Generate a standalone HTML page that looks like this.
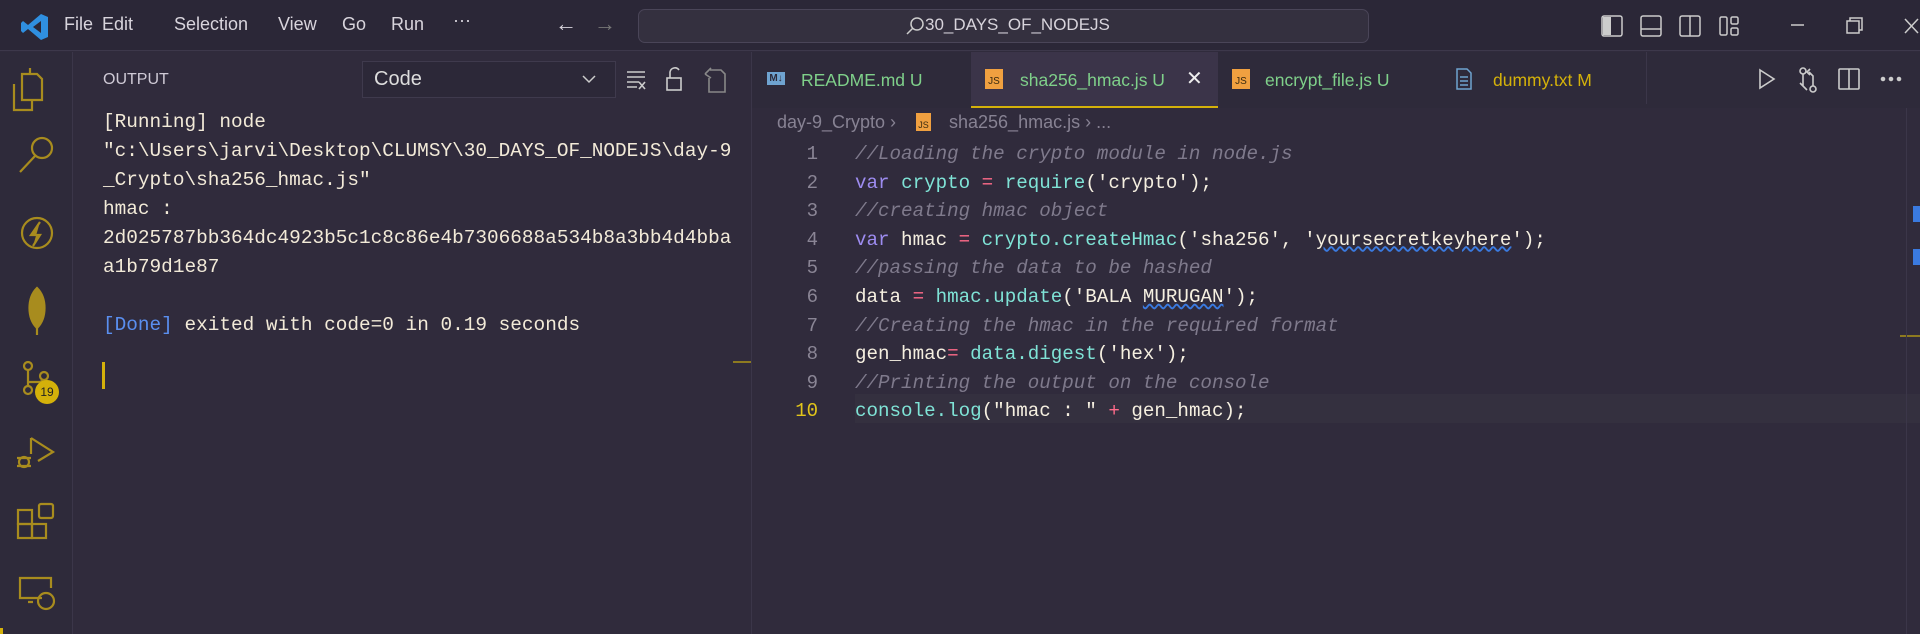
<!DOCTYPE html>
<html><head><meta charset="utf-8"><style>
*{margin:0;padding:0;box-sizing:border-box}
body{width:1920px;height:634px;overflow:hidden;background:#302b3c;font-family:"Liberation Sans",sans-serif;position:relative;color:#ddd}
.a{position:absolute}
.title{left:0;top:0;width:1920px;height:51px;background:#2b2737;border-bottom:1px solid #3d384b}
.menu{top:14px;font-size:18px;color:#d8d4dc}
.act{left:0;top:52px;width:73px;height:582px;background:#2e2a3a;border-right:1px solid #3b3649}
.mono{font-family:"Liberation Mono",monospace}
.out{left:103px;font-size:19.4px;color:#f2ead8;white-space:pre;letter-spacing:0}
.code{left:855px;font-size:19.2px;white-space:pre;color:#f5efe0}
.ln{left:770px;width:48px;text-align:right;font-size:19px;color:#8a8595}
.cm{color:#7f7a8c;font-style:italic}.kw{color:#9d8cf0}.fn{color:#7fe3d6}.op{color:#ff6b8a}.st{color:#f5efe0}
.tab{top:70px;font-size:17.5px}
svg{position:absolute}
</style></head><body>
<div class="a title"></div>
<svg style="left:20px;top:12px" width="30" height="30" viewBox="0 0 30 30"><path d="M21 2 L28 5 V25 L21 28 L8 17 L3 21 L1 19 V11 L3 9 L8 13 Z M21 9 L13 15 L21 21 Z" fill="#2f8fe0"/></svg>
<div class="a menu" style="left:64px">File</div>
<div class="a menu" style="left:102px">Edit</div>
<div class="a menu" style="left:174px">Selection</div>
<div class="a menu" style="left:278px">View</div>
<div class="a menu" style="left:342px">Go</div>
<div class="a menu" style="left:391px">Run</div>
<div class="a menu" style="left:453px;top:10px">···</div>
<div class="a menu" style="left:555px;top:11px;font-size:22px">←</div>
<div class="a menu" style="left:594px;top:11px;font-size:22px;color:#777">→</div>
<div class="a" style="left:638px;top:9px;width:731px;height:34px;border:1px solid #4a4558;border-radius:7px;background:#34303f"></div>
<svg style="left:905px;top:16px" width="20" height="20"><circle cx="12" cy="8" r="6" fill="none" stroke="#ccc" stroke-width="1.5"/><path d="M8 12 L2 18" stroke="#ccc" stroke-width="1.5"/></svg>
<div class="a" style="left:925px;top:15px;font-size:17px;color:#d8d4dc">30_DAYS_OF_NODEJS</div>
<svg style="left:1600px;top:14px" width="320" height="24" fill="none" stroke="#ccc" stroke-width="1.5">
<rect x="2" y="2" width="20" height="20" rx="2"/><rect x="3" y="3" width="8" height="18" fill="#ccc" stroke="none"/>
<rect x="41" y="2" width="20" height="20" rx="2"/><path d="M41 15 H61"/>
<rect x="80" y="2" width="20" height="20" rx="2"/><path d="M90 2 V22"/>
<rect x="120" y="3" width="7" height="18" rx="1.5"/><rect x="131" y="3" width="7" height="7" rx="1.5"/><rect x="131" y="14" width="7" height="7" rx="1.5"/>
<path d="M191 11 H204"/>
<rect x="247" y="7" width="12" height="12"/><path d="M250 7 V4 H262 V16 H259"/>
<path d="M305 5 L318 19 M318 5 L305 19"/></svg>

<div class="a act"></div>
<svg style="left:0;top:60px" width="73" height="574" fill="none" stroke="#a88c1e" stroke-width="2.2">
<path d="M22 14 H37 L42 19 V40 H22 Z M30 14 V8 M14 24 V50 H32 V40"/>
<circle cx="42" cy="88" r="10"/><path d="M35 96 L20 112"/>
<circle cx="37" cy="173" r="15"/><path d="M40 162 L31 175 H40 L33 186" fill="#a88c1e"/>
<path d="M37 228 C47 238 47 258 37 268 C27 258 27 238 37 228 Z" fill="#a88c1e"/><path d="M37 268 V275"/>
<circle cx="28" cy="306" r="4"/><circle cx="44" cy="316" r="4"/><circle cx="28" cy="330" r="4"/><path d="M28 310 V326 M28 322 H40 L44 320"/>
<path d="M31 378 L53 392 L38 401 M31 378 V394"/><circle cx="24" cy="402" r="5"/><path d="M17 398 H31 M17 406 H31"/>
<rect x="18" y="450" width="14" height="14"/><rect x="18" y="464" width="14" height="14"/><rect x="32" y="464" width="14" height="14"/><rect x="39" y="444" width="14" height="14" rx="2"/>
<path d="M42 538 H20 V518 H51 V528 M28 542 H33"/><circle cx="46" cy="541" r="8"/></svg>
<div class="a" style="left:35px;top:380px;width:24px;height:24px;border-radius:50%;background:#d4b10a;color:#222;font-size:12px;text-align:center;line-height:24px">19</div>
<div class="a" style="left:0;top:628px;width:3px;height:6px;background:#d4b10a"></div>

<div class="a" style="left:103px;top:71px;font-size:16px;color:#cfcad6">OUTPUT</div>
<div class="a" style="left:362px;top:61px;width:254px;height:37px;border:1px solid #3f3a4d;background:#2c2838"></div>
<div class="a" style="left:374px;top:68px;font-size:20px;color:#ddd">Code</div>
<svg style="left:580px;top:72px" width="18" height="14"><path d="M3 4 L9 10 L15 4" fill="none" stroke="#ccc" stroke-width="1.5"/></svg>
<svg style="left:625px;top:64px" width="110" height="32" fill="none" stroke="#ccc" stroke-width="1.6">
<path d="M2 8 H20 M2 13 H20 M2 18 H14 M2 23 H12 M14 18 L20 25 M20 18 L14 25"/>
<rect x="42" y="14" width="14" height="12"/><path d="M45 14 V8 A5 5 0 0 1 54 6"/>
<path d="M85 6 H96 L100 10 V28 H84 V14 M80 10 L86 4 M80 10 L86 14" stroke="#888"/></svg>
<div class="a out mono" style="top:108px;line-height:29px">[Running] node
"c:\Users\jarvi\Desktop\CLUMSY\30_DAYS_OF_NODEJS\day-9
_Crypto\sha256_hmac.js"
hmac :
2d025787bb364dc4923b5c1c8c86e4b7306688a534b8a3bb4d4bba
a1b79d1e87

<span style="color:#5a8ff0">[Done]</span> exited with code=0 in 0.19 seconds</div>
<div class="a" style="left:102px;top:362px;width:3px;height:27px;background:#d4b10a"></div>
<div class="a" style="left:733px;top:361px;width:18px;height:2px;background:#8d7a20"></div>
<div class="a" style="left:751px;top:52px;width:1px;height:582px;background:#3b3649"></div>

<div class="a" style="left:752px;top:52px;width:1168px;height:56px;background:#2e2a3a"></div>
<div class="a" style="left:971px;top:52px;width:247px;height:56px;background:#3b3449;border-bottom:2px solid #d4b10a"></div>
<div class="a" style="left:1646px;top:52px;width:1px;height:52px;background:#3b3649"></div>
<div class="a" style="left:767px;top:72px;width:18px;height:13px;background:#6fa3d0;color:#2e2a3a;font-size:10px;font-weight:bold;line-height:13px;text-align:center">M↓</div>
<div class="a tab" style="left:801px;color:#7fd08a">README.md U</div>
<div class="a" style="left:985px;top:69px;width:18px;height:20px;background:#f0a040;color:#3a2a10;font-size:10px;line-height:26px;text-align:center">JS</div>
<div class="a tab" style="left:1020px;color:#7fd08a">sha256_hmac.js U</div>
<div class="a" style="left:1186px;top:66px;font-size:20px;color:#eee">✕</div>
<div class="a" style="left:1232px;top:69px;width:18px;height:20px;background:#f0a040;color:#3a2a10;font-size:10px;line-height:26px;text-align:center">JS</div>
<div class="a tab" style="left:1265px;color:#7fd08a">encrypt_file.js U</div>
<svg style="left:1455px;top:68px" width="18" height="22" fill="none" stroke="#6fa3d0" stroke-width="1.5"><path d="M2 1 H12 L16 5 V21 H2 Z M5 9 H13 M5 13 H13 M5 17 H13"/></svg>
<div class="a tab" style="left:1493px;color:#d4b10a">dummy.txt M</div>
<svg style="left:1755px;top:66px" width="160" height="28" fill="none" stroke="#ccc" stroke-width="1.6">
<path d="M5 4 L19 13 L5 22 Z"/>
<circle cx="48" cy="5" r="3"/><circle cx="58" cy="23" r="3"/><path d="M48 8 V20 L52 24 M58 20 V10 L54 6 M55 3 L52 6 L55 9 M48 20 L45 17"/>
<rect x="84" y="3" width="20" height="20" rx="1"/><path d="M94 3 V23"/>
<circle cx="128" cy="13" r="1.5" fill="#ccc"/><circle cx="136" cy="13" r="1.5" fill="#ccc"/><circle cx="144" cy="13" r="1.5" fill="#ccc"/></svg>

<div class="a" style="left:777px;top:112px;font-size:18px;color:#878293">day-9_Crypto ›</div>
<div class="a" style="left:916px;top:113px;width:15px;height:18px;background:#f0a040;color:#3a2a10;font-size:9px;line-height:24px;text-align:center">JS</div>
<div class="a" style="left:949px;top:112px;font-size:18px;color:#878293">sha256_hmac.js › ...</div>

<div class="a" style="left:855px;top:394px;width:1065px;height:29px;background:#34303f"></div>
<div class="a ln mono" style="top:140px;line-height:28.6px">1<br>2<br>3<br>4<br>5<br>6<br>7<br>8<br>9<br><span style="color:#e2c51a">10</span></div>
<div class="a code mono" style="top:140px;line-height:28.6px"><span class="cm">//Loading the crypto module in node.js</span>
<span class="kw">var</span> <span class="fn">crypto</span> <span class="op">=</span> <span class="fn">require</span>('crypto');
<span class="cm">//creating hmac object</span>
<span class="kw">var</span> hmac <span class="op">=</span> <span class="fn">crypto.createHmac</span>('sha256', '<span style="text-decoration:underline wavy #3a7ae0">yoursecretkeyhere</span>');
<span class="cm">//passing the data to be hashed</span>
data <span class="op">=</span> <span class="fn">hmac.update</span>('BALA <span style="text-decoration:underline wavy #3a7ae0">MURUGAN</span>');
<span class="cm">//Creating the hmac in the required format</span>
gen_hmac<span class="op">=</span> <span class="fn">data.digest</span>('hex');
<span class="cm">//Printing the output on the console</span>
<span class="fn">console.log</span>("hmac : " <span class="op">+</span> gen_hmac);</div>

<div class="a" style="left:1913px;top:206px;width:7px;height:16px;background:#3a7ae0"></div>
<div class="a" style="left:1913px;top:249px;width:7px;height:16px;background:#3a7ae0"></div>
<div class="a" style="left:1900px;top:335px;width:20px;height:2px;background:#8d7a20"></div>
<div class="a" style="left:1906px;top:108px;width:1px;height:526px;background:#3b3649"></div>
</body></html>
